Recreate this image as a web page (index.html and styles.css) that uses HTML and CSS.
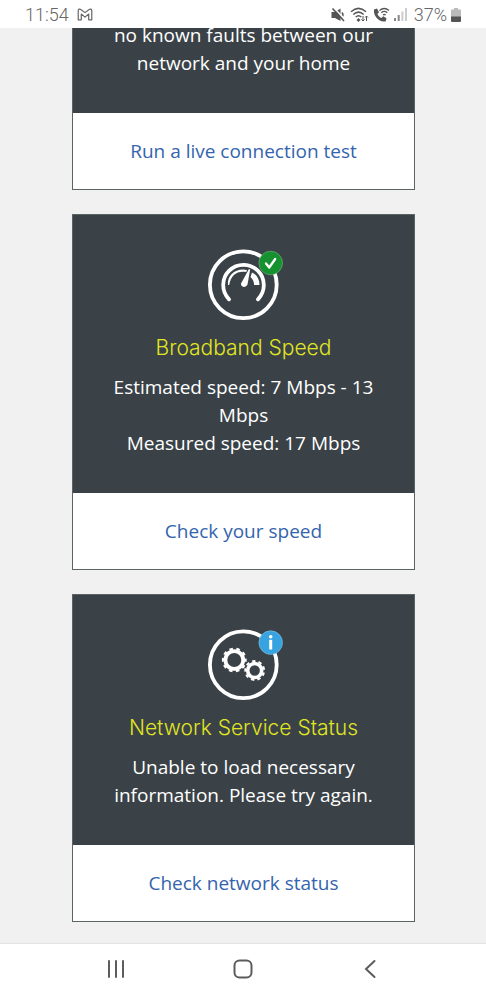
FILE: index.html
```html
<!DOCTYPE html>
<html lang="en">
<head>
<meta charset="utf-8">
<meta name="viewport" content="width=device-width, initial-scale=1">
<title>Broadband status</title>
<link rel="stylesheet" href="styles.css">
</head>
<body>
<header class="statusbar">
  <div class="status-group">
    <span>11:54</span>
    <svg width="16" height="13" viewBox="0 0 17 14" fill="none" stroke="#666" stroke-width="1.3" stroke-linejoin="round"><path d="M1.200 12.700V2.800C1.200 1.200 2.800.6 4 1.600L8.500 5 13 1.600c1.200-1 2.800-.4 2.800 1.200v9.900h-3.300V6.500L8.500 9.800 4.500 6.500v6.200z"/></svg>
  </div>
  <div class="status-group status-right">
    <svg width="15" height="16" viewBox="0 0 15 16" fill="#555"><path d="M.5 5h3.500L9.500 1.500v12.500L4 11H.5z"/><path d="M11 5.500q2 2.300 0 5" fill="none" stroke="#555" stroke-width="1.500"/><path d="M3 1L14.500 13" stroke="#fff" stroke-width="1.600"/><path d="M1.500 1.500L13 14" stroke="#555" stroke-width="1.600"/></svg>
    <svg width="19" height="16" viewBox="0 0 19 16" fill="none" stroke="#555" stroke-width="1.500"><path d="M1 4.800Q8.500-2 16 4.800M3.300 7.500q5.200-4.800 10.400 0M5.700 10q2.800-2.600 5.600 0"/><path d="M8.500 11l2 2-2 2-2-2z" fill="#555" stroke="none"/><path d="M13 9v5m-1.600-1.600L13 14l1.600-1.600M16.500 14V9m-1.400 1.500L16.500 9 18 10.500" stroke-width="1"/></svg>
    <svg width="17" height="16" viewBox="0 0 17 16" fill="none" stroke="#555" stroke-width="1.300"><path d="M1 2.500l3-.9 2 3.700-1.600 1.800c.8 2 2 3 3.900 3.800l1.900-1.700 3.300 2-.7 3C7 16 0 9.500 1 2.500z" fill="#555" stroke="none"/><path d="M6.500 3.500q4.700-4 9.500 0M8.300 5.700q3-2.500 6 0M10 8q1.300-1 2.600 0"/></svg>
    <svg width="14" height="15" viewBox="0 0 14 15"><path d="M0 11h2v3H0zM3.700 8h2v6h-2z" fill="#888"/><path d="M7.400 4.500h2V14h-2zM11 1h2v13h-2z" fill="#ccc"/></svg>
    <span>37%</span>
    <svg width="10" height="14" viewBox="0 0 10 14"><path d="M3 0h4v1.500h3V9H0V1.500h3z" fill="#bbb"/><path d="M0 8.500h10V13q0 1-1 1H1q-1 0-1-1z" fill="#555"/></svg>
  </div>
</header>

<main class="content">
  <section class="card">
    <div class="card-body">
      <p>no known faults between our network and your home</p>
    </div>
    <a class="card-link" href="#">Run a live connection test</a>
  </section>

  <section class="card">
    <div class="card-body">
      <svg class="card-icon" width="71" height="71" viewBox="8 9 71 71" fill="none">
        <circle cx="43.300" cy="44.700" r="33.400" stroke="#fff" stroke-width="3.800"/>
        <path d="M29 59.300A20.300 20.300 0 1 1 58 59.300" stroke="#fff" stroke-width="3.800" stroke-linecap="round"/>
        <path d="M28 45C27 36 34 29.500 43 29.500q2 0 4 .5l-.8 2C37 30.500 31 35 29.200 45z" fill="#fff"/>
        <path d="M52 32.500C56.500 34.500 59.500 39 59.500 45H54q0-5-3.500-8z" fill="#fff"/>
        <path d="M48.800 29.200h1.400L47.500 44.500q-1.300 2.800-4.300 2.300-2.600-.7-2-3.600z" fill="#fff"/>
        <circle cx="70.700" cy="23" r="11.800" fill="#15912f" stroke="#77b985" stroke-width=".6"/>
        <path d="M66 23.500l3.200 4 6-8.500" stroke="#fff" stroke-width="2.300" stroke-linecap="round" stroke-linejoin="round"/>
      </svg>
      <h2>Broadband Speed</h2>
      <p>Estimated speed: 7 Mbps - 13 Mbps<br>Measured speed: 17 Mbps</p>
    </div>
    <a class="card-link" href="#">Check your speed</a>
  </section>

  <section class="card">
    <div class="card-body">
      <svg class="card-icon" width="71" height="71" viewBox="8 9 71 71" fill="none">
        <circle cx="43.300" cy="44.700" r="33.400" stroke="#fff" stroke-width="3.800"/>
        <g stroke="#fff">
          <circle cx="34.300" cy="40" r="8.900" stroke-width="3.800"/>
          <circle cx="34.300" cy="40" r="11.400" stroke-width="2" stroke-dasharray="3.600 3.563" stroke-dashoffset="1.800"/>
          <circle cx="54.700" cy="50.500" r="7" stroke-width="3.600"/>
          <circle cx="54.700" cy="50.500" r="9.400" stroke-width="2" stroke-dasharray="3.400 3.162" stroke-dashoffset="-2"/>
        </g>
        <circle cx="70.700" cy="22.600" r="11.800" fill="#37a3e0" stroke="#8ac4e4" stroke-width=".6"/>
        <circle cx="70.700" cy="16.800" r="1.800" fill="#fff"/>
        <path d="M69.200 19.800h3v9.700h-3z" fill="#fff"/>
      </svg>
      <h2>Network Service Status</h2>
      <p>Unable to load necessary information. Please try again.</p>
    </div>
    <a class="card-link" href="#">Check network status</a>
  </section>
</main>

<nav class="navbar">
  <button aria-label="Recent apps"><svg width="20" height="20" viewBox="0 0 20 20" stroke="#5c5c5c" stroke-width="2" stroke-linecap="round"><path d="M3 2v16M10 2v16M17 2v16"/></svg></button>
  <button aria-label="Home"><svg width="20" height="20" viewBox="0 0 20 20" fill="none" stroke="#5c5c5c" stroke-width="2"><rect x="1.500" y="1.500" width="17" height="17" rx="5"/></svg></button>
  <button aria-label="Back"><svg width="20" height="20" viewBox="0 0 20 20" fill="none" stroke="#5c5c5c" stroke-width="2" stroke-linecap="round"><path d="M14.500 2L6 10l8.500 8"/></svg></button>
</nav>
</body>
</html>
```
FILE: styles.css
```css
* {
  box-sizing: border-box;
}

body {
  margin: 0;
  height: 100vh;
  display: flex;
  flex-direction: column;
  background: #f1f1f1;
  font-family: "Open Sans", "Noto Sans", sans-serif;
  font-size: 19px;
  line-height: 28px;
}

.statusbar {
  flex: none;
  height: 28px;
  padding: 1px 25px 0;
  display: flex;
  justify-content: space-between;
  background: #fff;
  color: #666;
  font-family: Roboto, sans-serif;
  font-size: 18px;
  font-weight: 300;
}

.status-group {
  display: flex;
  align-items: center;
  gap: 8px;
}

.status-right {
  gap: 4px;
}

.status-right span {
  margin-left: 2px;
}

.content {
  flex: 1;
  min-height: 0;
  overflow: hidden;
  display: flex;
  flex-direction: column;
  justify-content: flex-end;
  gap: 24px;
  padding: 0 71px 21px 72px;
}

.card {
  flex: none;
  border: 1px solid #5b6465;
  background: #fff;
  text-align: center;
}

.card-body {
  padding: 34px 36px 36px;
  background: #3a4247;
  color: #fff;
}

.card-icon {
  display: block;
  margin: 0 auto;
  overflow: visible;
}

.card h2 {
  margin: 13px -20px 10px;
  color: #e0e622;
  font-family: Inter, sans-serif;
  font-size: 21px;
  font-weight: 300;
  line-height: 30px;
}

.card p {
  margin: 0;
}

.card-link {
  display: block;
  padding: 24px 0;
  color: #3464ad;
  text-decoration: none;
}

.navbar {
  flex: none;
  height: 56px;
  padding: 0 53px;
  display: flex;
  border-top: 1px solid #e3e3e3;
  background: #fff;
}

.navbar button {
  flex: 1;
  display: flex;
  align-items: center;
  justify-content: center;
  padding: 0 0 5px;
  border: 0;
  background: none;
}
```
